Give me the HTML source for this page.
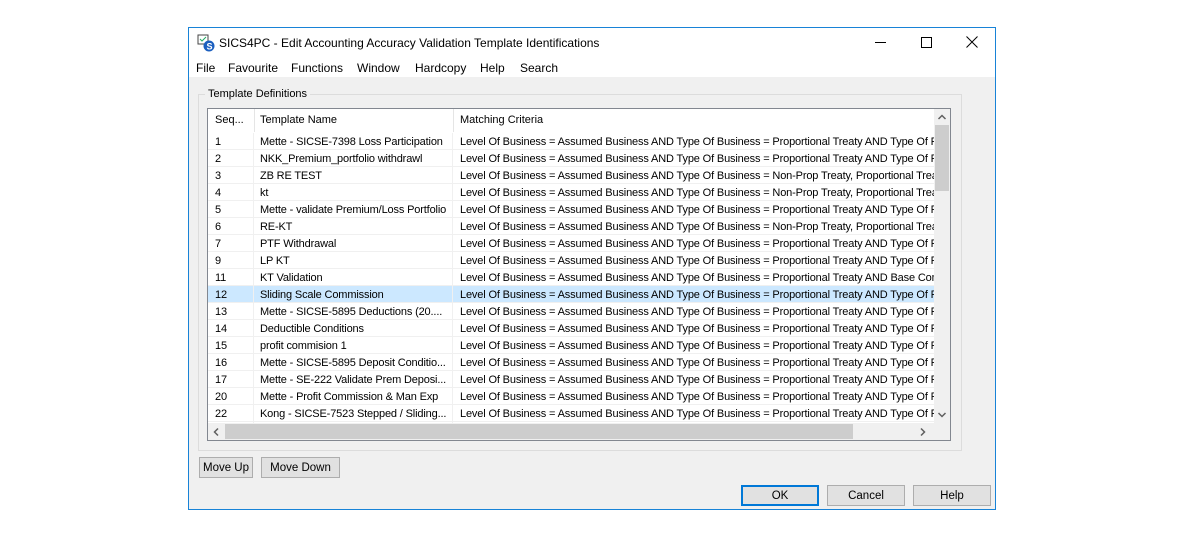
<!DOCTYPE html>
<html><head><style>
body{margin:0;width:1184px;height:536px;background:#fff;font-family:"Liberation Sans",sans-serif;font-size:12px;position:relative;overflow:hidden}
.a{position:absolute}
.win{left:188px;top:27px;width:806px;height:481px;border:1px solid #1883d7;background:#f0f0f0}
.title{left:0;top:0;width:806px;height:49px;background:#fff}
.btn{position:absolute;background:#e1e1e1;border:1px solid #adadad;text-align:center;line-height:20px;font-size:11.5px;box-sizing:border-box}
.row{position:absolute;left:0;height:17px;width:726px;border-bottom:1px solid #f0f0f0;box-sizing:border-box;white-space:nowrap;overflow:hidden;font-size:11px;letter-spacing:-0.15px}
.row span{position:absolute;top:3px;overflow:hidden}
.row span:nth-child(2){width:188px}
.m{position:absolute;top:33px;font-size:12px}
</style></head><body>
<div class="a win">
 <div class="a title"></div>
 <svg class="a" style="left:8px;top:6px" width="18" height="18"><rect x="1" y="1" width="10" height="9" fill="#fff" stroke="#444"/><path d="M3 5l2 2 4-4" stroke="#2a6" fill="none"/><circle cx="12" cy="12" r="5.5" fill="#1b5fbf"/><text x="9.5" y="15.5" fill="#fff" font-size="9" font-family="Liberation Sans" font-weight="bold">S</text></svg>
 <div class="a" style="left:30px;top:8px;font-size:12px">SICS4PC - Edit Accounting Accuracy Validation Template Identifications</div>
 <div class="a" style="left:686px;top:14px;width:11px;height:1px;background:#000"></div>
 <div class="a" style="left:732px;top:9px;width:9px;height:9px;border:1px solid #000"></div>
 <svg class="a" style="left:777px;top:8px" width="12" height="12"><path d="M0.5 0.5L11.5 11.5M11.5 0.5L0.5 11.5" stroke="#000"/></svg>
 <span class="m" style="left:7px">File</span><span class="m" style="left:39px">Favourite</span><span class="m" style="left:102px">Functions</span><span class="m" style="left:168px">Window</span><span class="m" style="left:226px">Hardcopy</span><span class="m" style="left:291px">Help</span><span class="m" style="left:331px">Search</span>
 <div class="a" style="left:9px;top:66px;width:762px;height:355px;border:1px solid #dcdcdc"></div>
 <div class="a" style="left:16px;top:60px;background:#f0f0f0;padding:0 3px;font-size:11px">Template Definitions</div>
 <div class="a" style="left:18px;top:80px;width:742px;height:331px;border:1px solid #828790;background:#fff;overflow:hidden;font-size:11px">
  <div class="a" style="left:0;top:0;width:727px;height:23px;background:#fff">
   <span class="a" style="left:7px;top:5px">Seq...</span><div class="a" style="left:46px;top:0;width:1px;height:23px;background:#e5e5e5"></div>
   <span class="a" style="left:52px;top:5px">Template Name</span><div class="a" style="left:245px;top:0;width:1px;height:23px;background:#e5e5e5"></div>
   <span class="a" style="left:252px;top:5px">Matching Criteria</span>
  </div>
  <div class="a" style="left:0;top:24px;width:727px;height:290px" id="rows">
<div class="row" style="top:0px"><span style="left:7px">1</span><span style="left:52px">Mette - SICSE-7398 Loss Participation</span><span style="left:252px">Level Of Business = Assumed Business AND Type Of Business = Proportional Treaty AND Type Of F</span></div>
<div class="row" style="top:17px"><span style="left:7px">2</span><span style="left:52px">NKK_Premium_portfolio withdrawl</span><span style="left:252px">Level Of Business = Assumed Business AND Type Of Business = Proportional Treaty AND Type Of F</span></div>
<div class="row" style="top:34px"><span style="left:7px">3</span><span style="left:52px">ZB RE TEST</span><span style="left:252px">Level Of Business = Assumed Business AND Type Of Business = Non-Prop Treaty, Proportional Trea</span></div>
<div class="row" style="top:51px"><span style="left:7px">4</span><span style="left:52px">kt</span><span style="left:252px">Level Of Business = Assumed Business AND Type Of Business = Non-Prop Treaty, Proportional Trea</span></div>
<div class="row" style="top:68px"><span style="left:7px">5</span><span style="left:52px">Mette - validate Premium/Loss Portfolio</span><span style="left:252px">Level Of Business = Assumed Business AND Type Of Business = Proportional Treaty AND Type Of F</span></div>
<div class="row" style="top:85px"><span style="left:7px">6</span><span style="left:52px">RE-KT</span><span style="left:252px">Level Of Business = Assumed Business AND Type Of Business = Non-Prop Treaty, Proportional Trea</span></div>
<div class="row" style="top:102px"><span style="left:7px">7</span><span style="left:52px">PTF Withdrawal</span><span style="left:252px">Level Of Business = Assumed Business AND Type Of Business = Proportional Treaty AND Type Of F</span></div>
<div class="row" style="top:119px"><span style="left:7px">9</span><span style="left:52px">LP KT</span><span style="left:252px">Level Of Business = Assumed Business AND Type Of Business = Proportional Treaty AND Type Of F</span></div>
<div class="row" style="top:136px"><span style="left:7px">11</span><span style="left:52px">KT Validation</span><span style="left:252px">Level Of Business = Assumed Business AND Type Of Business = Proportional Treaty AND Base Com</span></div>
<div class="row" style="top:153px;background:#cce8ff"><span style="left:7px">12</span><span style="left:52px">Sliding Scale Commission</span><span style="left:252px">Level Of Business = Assumed Business AND Type Of Business = Proportional Treaty AND Type Of F</span></div>
<div class="row" style="top:170px"><span style="left:7px">13</span><span style="left:52px">Mette - SICSE-5895 Deductions (20....</span><span style="left:252px">Level Of Business = Assumed Business AND Type Of Business = Proportional Treaty AND Type Of F</span></div>
<div class="row" style="top:187px"><span style="left:7px">14</span><span style="left:52px">Deductible Conditions</span><span style="left:252px">Level Of Business = Assumed Business AND Type Of Business = Proportional Treaty AND Type Of F</span></div>
<div class="row" style="top:204px"><span style="left:7px">15</span><span style="left:52px">profit commision 1</span><span style="left:252px">Level Of Business = Assumed Business AND Type Of Business = Proportional Treaty AND Type Of F</span></div>
<div class="row" style="top:221px"><span style="left:7px">16</span><span style="left:52px">Mette - SICSE-5895 Deposit Conditio...</span><span style="left:252px">Level Of Business = Assumed Business AND Type Of Business = Proportional Treaty AND Type Of F</span></div>
<div class="row" style="top:238px"><span style="left:7px">17</span><span style="left:52px">Mette - SE-222 Validate Prem Deposi...</span><span style="left:252px">Level Of Business = Assumed Business AND Type Of Business = Proportional Treaty AND Type Of F</span></div>
<div class="row" style="top:255px"><span style="left:7px">20</span><span style="left:52px">Mette - Profit Commission &amp; Man Exp</span><span style="left:252px">Level Of Business = Assumed Business AND Type Of Business = Proportional Treaty AND Type Of F</span></div>
<div class="row" style="top:272px"><span style="left:7px">22</span><span style="left:52px">Kong - SICSE-7523 Stepped / Sliding...</span><span style="left:252px">Level Of Business = Assumed Business AND Type Of Business = Proportional Treaty AND Type Of F</span></div>
  </div>
  <div class="a" style="left:45px;top:24px;width:1px;height:290px;background:#f0f0f0"></div>
  <div class="a" style="left:244px;top:24px;width:1px;height:290px;background:#f0f0f0"></div>
  <div class="a" style="left:726px;top:0;width:16px;height:314px;background:#f0f0f0"></div>
  <div class="a" style="left:727px;top:16px;width:14px;height:66px;background:#cdcdcd"></div>
  <svg class="a" style="left:729px;top:4px" width="10" height="8"><path d="M1.5 6l3.5-3.5 3.5 3.5" stroke="#606060" stroke-width="1.5" fill="none"/></svg>
  <svg class="a" style="left:729px;top:302px" width="10" height="8"><path d="M1.5 2l3.5 3.5 3.5-3.5" stroke="#606060" stroke-width="1.5" fill="none"/></svg>
  <div class="a" style="left:0;top:314px;width:742px;height:17px;background:#f0f0f0"></div>
  <div class="a" style="left:17px;top:315px;width:628px;height:15px;background:#cdcdcd"></div>
  <svg class="a" style="left:4px;top:318px" width="8" height="10"><path d="M6 1.5l-3.5 3.5 3.5 3.5" stroke="#606060" stroke-width="1.5" fill="none"/></svg>
  <svg class="a" style="left:711px;top:318px" width="8" height="10"><path d="M2 1.5l3.5 3.5-3.5 3.5" stroke="#606060" stroke-width="1.5" fill="none"/></svg>
 </div>
 <div class="btn" style="left:10px;top:429px;width:54px;height:21px">Move Up</div>
 <div class="btn" style="left:72px;top:429px;width:79px;height:21px">Move Down</div>
 <div class="btn" style="left:552px;top:457px;width:78px;height:21px;border:2px solid #0078d7;line-height:18px">OK</div>
 <div class="btn" style="left:638px;top:457px;width:78px;height:21px">Cancel</div>
 <div class="btn" style="left:724px;top:457px;width:78px;height:21px">Help</div>
</div>
</body></html>
